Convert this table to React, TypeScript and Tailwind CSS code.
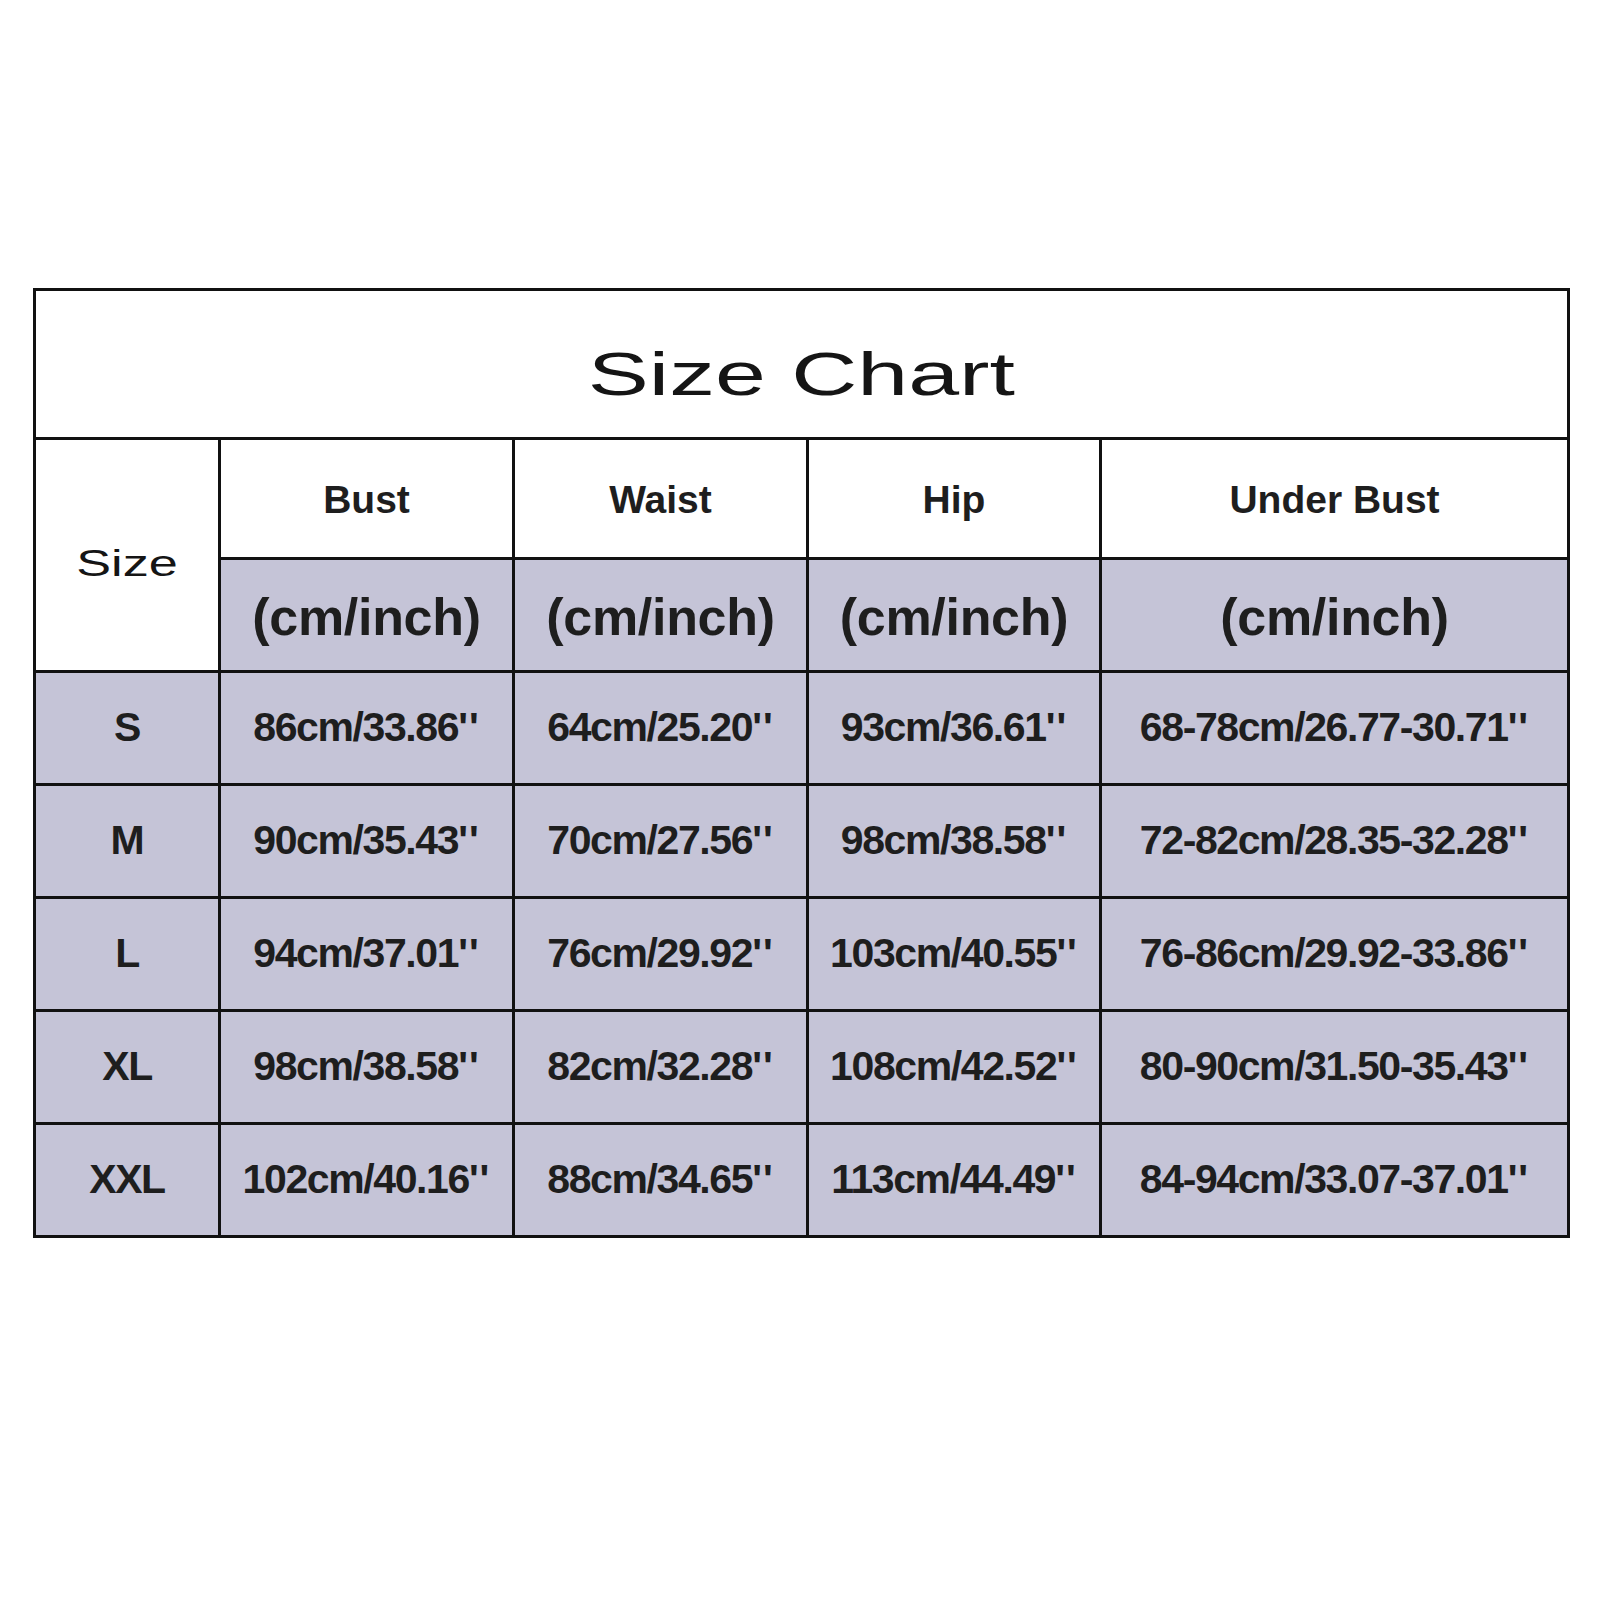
import React from "react";

const rows = [
  { size: "S", bust: "86cm/33.86", waist: "64cm/25.20", hip: "93cm/36.61", under: "68-78cm/26.77-30.71" },
  { size: "M", bust: "90cm/35.43", waist: "70cm/27.56", hip: "98cm/38.58", under: "72-82cm/28.35-32.28" },
  { size: "L", bust: "94cm/37.01", waist: "76cm/29.92", hip: "103cm/40.55", under: "76-86cm/29.92-33.86" },
  { size: "XL", bust: "98cm/38.58", waist: "82cm/32.28", hip: "108cm/42.52", under: "80-90cm/31.50-35.43" },
  { size: "XXL", bust: "102cm/40.16", waist: "88cm/34.65", hip: "113cm/44.49", under: "84-94cm/33.07-37.01" },
];

const headers = ["Bust", "Waist", "Hip", "Under Bust"];

const cell = "flex items-center justify-center overflow-hidden";
const dataText = "text-[41px] font-bold tracking-[-1.4px] text-[#1e1e1e] whitespace-nowrap";
const gray = "bg-[#c5c4d7]";

function Measure({ value }: { value: string }) {
  return (
    <span className={dataText}>
      {value}
      <span className="tracking-[1px]">''</span>
    </span>
  );
}

export default function App() {
  return (
    <div
      className="h-[1600px] w-[1600px] bg-white pl-[33px] pt-[288px]"
      style={{ fontFamily: '"Liberation Sans", Arial, sans-serif' }}
    >
      <div className="grid w-[1537px] grid-cols-[182px_291px_291px_290px_465px] grid-rows-[146px_117px_110px_110px_110px_110px_110px_110px] gap-[3px] bg-[#111] p-[3px]">
        {/* title */}
        <div className={`${cell} col-span-5 bg-white pt-[20px]`}>
          <span className="inline-block scale-x-[1.5] text-[61px] font-normal leading-none text-[#151515]">
            Size Chart
          </span>
        </div>

        {/* size label, spans two header rows */}
        <div className={`${cell} row-span-2 bg-white pt-[18px]`}>
          <span className="inline-block scale-x-[1.45] text-[36px] font-normal leading-none text-[#151515]">
            Size
          </span>
        </div>
        {headers.map((h) => (
          <div key={h} className={`${cell} bg-white pt-[4px]`}>
            <span className="text-[39px] font-bold text-[#1e1e1e]">{h}</span>
          </div>
        ))}
        {headers.map((h) => (
          <div key={h + "-unit"} className={`${cell} ${gray} pt-[4px]`}>
            <span className="text-[52px] font-bold tracking-[-0.3px] text-[#1e1e1e]">(cm/inch)</span>
          </div>
        ))}

        {rows.map((r) => (
          <React.Fragment key={r.size}>
            <div className={`${cell} ${gray}`}>
              <span className={dataText}>{r.size}</span>
            </div>
            <div className={`${cell} ${gray}`}>
              <Measure value={r.bust} />
            </div>
            <div className={`${cell} ${gray}`}>
              <Measure value={r.waist} />
            </div>
            <div className={`${cell} ${gray}`}>
              <Measure value={r.hip} />
            </div>
            <div className={`${cell} ${gray}`}>
              <Measure value={r.under} />
            </div>
          </React.Fragment>
        ))}
      </div>
    </div>
  );
}
